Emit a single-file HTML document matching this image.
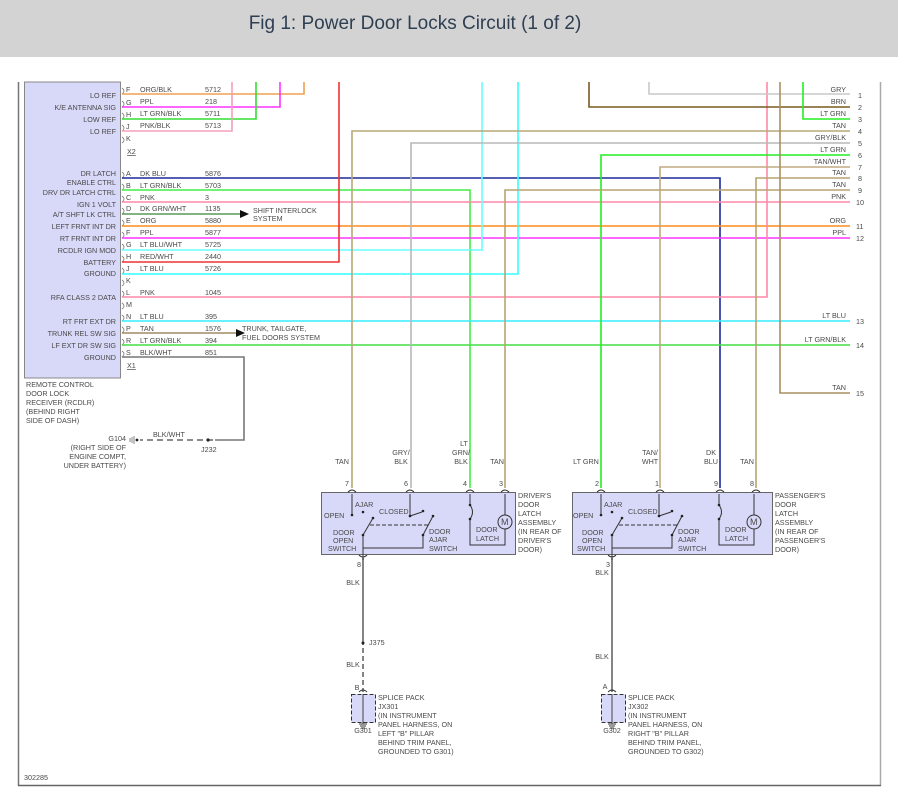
<!DOCTYPE html>
<html><head><meta charset="utf-8"><style>
body{margin:0;background:#fff;width:898px;height:806px;overflow:hidden}
svg text{font-family:"Liberation Sans",sans-serif;font-size:7.2px;fill:#4a4a4a}
</style></head><body>
<svg width="898" height="806" viewBox="0 0 898 806" xmlns="http://www.w3.org/2000/svg">
<rect x="0" y="0" width="898" height="57" fill="#d3d3d3"/>
<text x="415" y="29" text-anchor="middle" style="font-size:19px;fill:#2f3f52">Fig 1: Power Door Locks Circuit (1 of 2)</text>
<!-- frame -->
<line x1="18.5" y1="82" x2="18.5" y2="786" stroke="#777" stroke-width="1.5"/>
<line x1="880.5" y1="82" x2="880.5" y2="786" stroke="#aaa" stroke-width="1.5"/>
<line x1="18" y1="785.5" x2="881" y2="785.5" stroke="#666" stroke-width="1.5"/>
<!-- module -->
<rect x="24.5" y="82" width="96" height="296" fill="#d8d8f8" stroke="#888" stroke-width="1"/>
<g text-anchor="end">
<text x="116" y="98">LO REF</text><text x="116" y="110">K/E ANTENNA SIG</text><text x="116" y="122">LOW REF</text><text x="116" y="134">LO REF</text>
<text x="116" y="176">DR LATCH</text><text x="116" y="185">ENABLE CTRL</text><text x="116" y="195">DRV DR LATCH CTRL</text><text x="116" y="207">IGN 1 VOLT</text><text x="116" y="217">A/T SHFT LK CTRL</text><text x="116" y="229">LEFT FRNT INT DR</text><text x="116" y="241">RT FRNT INT DR</text><text x="116" y="253">RCDLR IGN MOD</text><text x="116" y="265">BATTERY</text><text x="116" y="276">GROUND</text>
<text x="116" y="300">RFA CLASS 2 DATA</text><text x="116" y="324">RT FRT EXT DR</text><text x="116" y="336">TRUNK REL SW SIG</text><text x="116" y="348">LF EXT DR SW SIG</text><text x="116" y="360">GROUND</text>
</g>
<g>
<text x="26" y="387">REMOTE CONTROL</text><text x="26" y="396">DOOR LOCK</text><text x="26" y="405">RECEIVER (RCDLR)</text><text x="26" y="414">(BEHIND RIGHT</text><text x="26" y="423">SIDE OF DASH)</text>
<text x="127" y="154" text-decoration="underline">X2</text><text x="127" y="368" text-decoration="underline">X1</text>
</g>
<!-- pin letters, wire names, numbers -->
<g>
<text x="126" y="92">F</text><text x="140" y="92">ORG/BLK</text><text x="205" y="92">5712</text>
<text x="126" y="105">G</text><text x="140" y="104">PPL</text><text x="205" y="104">218</text>
<text x="126" y="117">H</text><text x="140" y="116">LT GRN/BLK</text><text x="205" y="116">5711</text>
<text x="126" y="129">J</text><text x="140" y="128">PNK/BLK</text><text x="205" y="128">5713</text>
<text x="126" y="141">K</text>
<text x="126" y="176">A</text><text x="140" y="176">DK BLU</text><text x="205" y="176">5876</text>
<text x="126" y="188">B</text><text x="140" y="188">LT GRN/BLK</text><text x="205" y="188">5703</text>
<text x="126" y="200">C</text><text x="140" y="200">PNK</text><text x="205" y="200">3</text>
<text x="126" y="211">D</text><text x="140" y="211">DK GRN/WHT</text><text x="205" y="211">1135</text>
<text x="126" y="223">E</text><text x="140" y="223">ORG</text><text x="205" y="223">5880</text>
<text x="126" y="235">F</text><text x="140" y="235">PPL</text><text x="205" y="235">5877</text>
<text x="126" y="247">G</text><text x="140" y="247">LT BLU/WHT</text><text x="205" y="247">5725</text>
<text x="126" y="259">H</text><text x="140" y="259">RED/WHT</text><text x="205" y="259">2440</text>
<text x="126" y="271">J</text><text x="140" y="271">LT BLU</text><text x="205" y="271">5726</text>
<text x="126" y="283">K</text>
<text x="126" y="295">L</text><text x="140" y="295">PNK</text><text x="205" y="295">1045</text>
<text x="126" y="307">M</text>
<text x="126" y="319">N</text><text x="140" y="319">LT BLU</text><text x="205" y="319">395</text>
<text x="126" y="331">P</text><text x="140" y="331">TAN</text><text x="205" y="331">1576</text>
<text x="126" y="343">R</text><text x="140" y="343">LT GRN/BLK</text><text x="205" y="343">394</text>
<text x="126" y="355">S</text><text x="140" y="355">BLK/WHT</text><text x="205" y="355">851</text>
</g>
<g fill="none" stroke="#777" stroke-width="0.8">
<path d="M122 88q4 3 0 6M122 101q4 3 0 6M122 113q4 3 0 6M122 125q4 3 0 6M122 137q4 3 0 6M122 172q4 3 0 6M122 184q4 3 0 6M122 196q4 3 0 6M122 208q4 3 0 6M122 220q4 3 0 6M122 232q4 3 0 6M122 244q4 3 0 6M122 256q4 3 0 6M122 268q4 3 0 6M122 280q4 3 0 6M122 291q4 3 0 6M122 303q4 3 0 6M122 315q4 3 0 6M122 327q4 3 0 6M122 339q4 3 0 6M122 351q4 3 0 6"/>
</g>
<!-- wires -->
<g fill="none" stroke-width="1.6">
<path d="M122 94H304V82" stroke="#f0a050"/>
<path d="M122 107H280V82" stroke="#ff33ff"/>
<path d="M122 119H256V82" stroke="#33dd33"/>
<path d="M122 131H232V82" stroke="#f4a0b8"/>
<path d="M122 178H720V488" stroke="#1a2a9a"/>
<path d="M122 190H470V488" stroke="#44ee44"/>
<path d="M122 202H850" stroke="#ff88a8"/>
<path d="M122 214H240" stroke="#5a9a5a"/>
<path d="M122 226H850" stroke="#ff8c1a"/>
<path d="M122 238H850" stroke="#ff33ff"/>
<path d="M122 250H482V82" stroke="#66ffff"/>
<path d="M122 262H339V82" stroke="#ee3333"/>
<path d="M122 274H518V82" stroke="#33ffff"/>
<path d="M122 297H767V82" stroke="#ff88a8"/>
<path d="M122 321H850" stroke="#33eeff"/>
<path d="M122 333H236" stroke="#a08a60"/>
<path d="M122 345H850" stroke="#44dd44"/>
<path d="M122 357H244V440H215" stroke="#777"/>
<path d="M649 82V94H850" stroke="#c8c8c8"/>
<path d="M589 82V107H850" stroke="#7a5a20"/>
<path d="M803 82V119H850" stroke="#22ee22"/>
<path d="M352 488V131H850" stroke="#b8a878"/>
<path d="M411 488V143H850" stroke="#b8b8b8"/>
<path d="M601 488V155H850" stroke="#22ee22"/>
<path d="M660 488V167H850" stroke="#c0aa80"/>
<path d="M756 488V178H850" stroke="#b8a470"/>
<path d="M505 488V190H850" stroke="#b8a470"/>
<path d="M780 82V393H850" stroke="#a89060"/>
<path d="M363 558V640" stroke="#666"/>
<path d="M363 640V692" stroke="#666" stroke-dasharray="5 3"/>
<path d="M612 558V692" stroke="#666"/>
<path d="M213 440H140" stroke="#666" stroke-dasharray="6 4"/>
</g>
<polygon points="240,210 249,214 240,218" fill="#111"/>
<polygon points="236,329 245,333 236,337" fill="#111"/>
<text x="253" y="213">SHIFT INTERLOCK</text><text x="253" y="221">SYSTEM</text>
<text x="242" y="331">TRUNK, TAILGATE,</text><text x="242" y="340">FUEL DOORS SYSTEM</text>
<circle cx="208" cy="440" r="1.6" fill="#222"/><circle cx="137" cy="440" r="1.4" fill="#222"/>
<path d="M134 436v8M132 437v6M130 438v4" stroke="#666" stroke-width="0.8"/>
<text x="153" y="437">BLK/WHT</text><text x="201" y="452">J232</text>
<g text-anchor="end"><text x="126" y="441">G104</text><text x="126" y="450">(RIGHT SIDE OF</text><text x="126" y="459">ENGINE COMPT,</text><text x="126" y="468">UNDER BATTERY)</text></g>
<!-- right labels -->
<g text-anchor="end">
<text x="846" y="92">GRY</text><text x="846" y="104">BRN</text><text x="846" y="116">LT GRN</text><text x="846" y="128">TAN</text><text x="846" y="140">GRY/BLK</text><text x="846" y="152">LT GRN</text><text x="846" y="164">TAN/WHT</text><text x="846" y="175">TAN</text><text x="846" y="187">TAN</text><text x="846" y="199">PNK</text><text x="846" y="223">ORG</text><text x="846" y="235">PPL</text><text x="846" y="318">LT BLU</text><text x="846" y="342">LT GRN/BLK</text><text x="846" y="390">TAN</text>
</g>
<g>
<text x="858" y="98">1</text><text x="858" y="110">2</text><text x="858" y="122">3</text><text x="858" y="134">4</text><text x="858" y="146">5</text><text x="858" y="158">6</text><text x="858" y="170">7</text><text x="858" y="181">8</text><text x="858" y="193">9</text><text x="856" y="205">10</text><text x="856" y="229">11</text><text x="856" y="241">12</text><text x="856" y="324">13</text><text x="856" y="348">14</text><text x="856" y="396">15</text>
</g>
<!-- door assemblies -->
<g id="drv">
<rect x="321.5" y="492.5" width="194" height="62" fill="#d8d8f8" stroke="#666"/>
</g>
<rect x="572.5" y="492.5" width="200" height="62" fill="#d8d8f8" stroke="#666"/>
<g fill="none" stroke="#333" stroke-width="1">
<path d="M348 492q4-4 8 0M406 492q4-4 8 0M466 492q4-4 8 0M501 492q4-4 8 0M359 555q4 4 8 0"/>
<path d="M597 492q4-4 8 0M656 492q4-4 8 0M716 492q4-4 8 0M752 492q4-4 8 0M608 555q4 4 8 0"/>
</g>
<g text-anchor="middle">
<text x="342" y="464">TAN</text><text x="401" y="455">GRY/</text><text x="401" y="464">BLK</text><text x="464" y="446">LT</text><text x="461" y="455">GRN/</text><text x="461" y="464">BLK</text><text x="497" y="464">TAN</text>
<text x="347" y="486">7</text><text x="406" y="486">6</text><text x="465" y="486">4</text><text x="501" y="486">3</text>
<text x="359" y="567">8</text><text x="353" y="585">BLK</text><text x="353" y="667">BLK</text><text x="357" y="690">B</text><text x="363" y="733">G301</text>
<text x="586" y="464">LT GRN</text><text x="650" y="455">TAN/</text><text x="650" y="464">WHT</text><text x="711" y="455">DK</text><text x="711" y="464">BLU</text><text x="747" y="464">TAN</text>
<text x="597" y="486">2</text><text x="657" y="486">1</text><text x="716" y="486">9</text><text x="752" y="486">8</text>
<text x="608" y="567">3</text><text x="602" y="575">BLK</text><text x="602" y="659">BLK</text><text x="605" y="689">A</text><text x="612" y="733">G302</text>
</g>
<circle cx="363" cy="643" r="1.5" fill="#222"/><text x="369" y="645">J375</text>
<g>
<text x="518" y="498">DRIVER'S</text><text x="518" y="507">DOOR</text><text x="518" y="516">LATCH</text><text x="518" y="525">ASSEMBLY</text><text x="518" y="534">(IN REAR OF</text><text x="518" y="543">DRIVER'S</text><text x="518" y="552">DOOR)</text>
<text x="775" y="498">PASSENGER'S</text><text x="775" y="507">DOOR</text><text x="775" y="516">LATCH</text><text x="775" y="525">ASSEMBLY</text><text x="775" y="534">(IN REAR OF</text><text x="775" y="543">PASSENGER'S</text><text x="775" y="552">DOOR)</text>
</g>
<!-- switch internals -->
<g id="sw">
<g fill="none" stroke="#333" stroke-width="1">
<path d="M352 494V515"/><path d="M410 494V516L422 512"/>
<path d="M363 535L373 518"/><path d="M423 535L433 516"/>
<path d="M370 525H430" stroke-dasharray="4 2"/>
<path d="M363 535V560M363 548H423V535"/>
<path d="M470 494V505q5 7 0 14V545H505V529M505 494V515"/>
<circle cx="505" cy="522" r="7"/>
</g>
<g fill="#222"><circle cx="352" cy="515" r="1.3"/><circle cx="363" cy="512" r="1.3"/><circle cx="423" cy="511" r="1.3"/><circle cx="373" cy="518" r="1.3"/><circle cx="433" cy="516" r="1.3"/><circle cx="363" cy="535" r="1.3"/><circle cx="423" cy="535" r="1.3"/><circle cx="410" cy="516" r="1.3"/><circle cx="470" cy="505" r="1.3"/><circle cx="470" cy="519" r="1.3"/></g>
<text x="324" y="518">OPEN</text><text x="355" y="507">AJAR</text><text x="379" y="514">CLOSED</text>
<text x="333" y="535">DOOR</text><text x="333" y="543">OPEN</text><text x="328" y="551">SWITCH</text>
<text x="429" y="534">DOOR</text><text x="429" y="542">AJAR</text><text x="429" y="551">SWITCH</text>
<text x="476" y="532">DOOR</text><text x="476" y="541">LATCH</text>
<text x="501" y="525" style="font-size:9px">M</text>
</g>
<use href="#sw" x="249"/>
<!-- splice packs -->
<rect x="351.5" y="694.5" width="24" height="28" fill="#d8d8f8" stroke="#333" stroke-dasharray="4 2"/>
<rect x="601.5" y="694.5" width="24" height="28" fill="#d8d8f8" stroke="#333" stroke-dasharray="4 2"/>
<g fill="none" stroke="#333" stroke-width="0.9">
<path d="M359 692q4-4 8 0M363 694V724M359 724h8M360 726h6M361 728h4"/>
<path d="M608 692q4-4 8 0M612 694V724M608 724h8M609 726h6M610 728h4"/>
</g>
<g>
<text x="378" y="700">SPLICE PACK</text><text x="378" y="709">JX301</text><text x="378" y="718">(IN INSTRUMENT</text><text x="378" y="727">PANEL HARNESS, ON</text><text x="378" y="736">LEFT "B" PILLAR</text><text x="378" y="745">BEHIND TRIM PANEL,</text><text x="378" y="754">GROUNDED TO G301)</text>
<text x="628" y="700">SPLICE PACK</text><text x="628" y="709">JX302</text><text x="628" y="718">(IN INSTRUMENT</text><text x="628" y="727">PANEL HARNESS, ON</text><text x="628" y="736">RIGHT "B" PILLAR</text><text x="628" y="745">BEHIND TRIM PANEL,</text><text x="628" y="754">GROUNDED TO G302)</text>
<text x="24" y="780">302285</text>
</g>
</svg>
</body></html>
